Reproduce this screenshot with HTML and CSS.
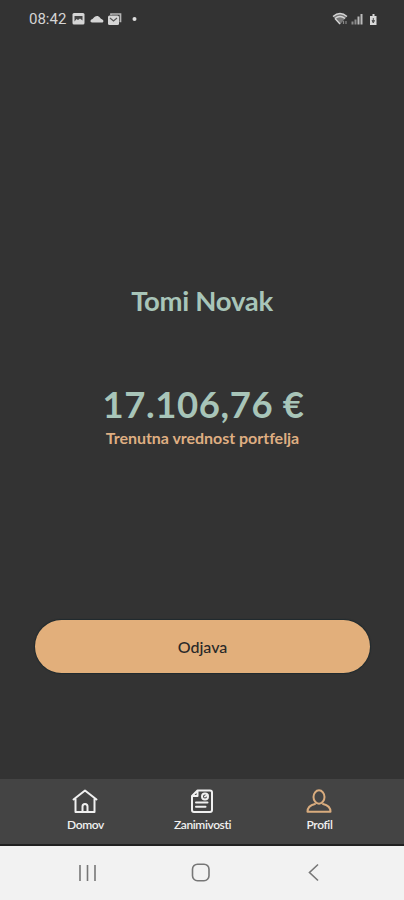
FILE: index.html
```html
<!DOCTYPE html>
<html lang="sl">
<head>
<meta charset="utf-8">
<title>Profil</title>
<link rel="stylesheet" href="styles.css">
</head>
<body>
<div class="screen">
  <header class="status">
    <span class="clock">08:42</span>
    <svg class="notifications" width="70" height="16" viewBox="0 0 70 16">
      <rect x="2.500" y="2" width="12" height="11.500" rx="1.500" fill="#d5d5d5"/>
      <path d="M4.500 10.500V5h8v4.500l-2.500-2-2 1.500-1.500-1z" fill="#444"/>
      <path d="M22 11.500c-2 0-2-2.500 0-3.200 1.500-.4 2-3.300 5-3.300 2.500 0 3 2.500 4.500 3 2.500.8 2.500 3.500.5 3.500z" fill="#d5d5d5"/>
      <path d="M41 4V3h9.500v7.500h-1" fill="none" stroke="#b5b5b5" stroke-width="1.700"/>
      <rect x="38" y="4.500" width="11" height="9.500" rx="1.500" fill="#d5d5d5"/>
      <path d="M40 7l3.500 3 3.500-3" fill="none" stroke="#555" stroke-width="1.200"/>
      <circle cx="64.500" cy="8" r="2" fill="#dedede"/>
    </svg>
    <svg class="signals" width="50" height="16" viewBox="0 0 50 16">
      <path d="M2 5.500q7-6 14 0l-7 8z" fill="#777"/>
      <path d="M2 5.500q7-6 14 0M4 7.500q5-4 10 0M4 7.500l5 5.500" fill="none" stroke="#d5d5d5" stroke-width="1.300"/>
      <path d="M12.500 13v-3m2.500 3v-3" stroke="#888" stroke-width="1.200"/>
      <path d="M21.500 13.500v-3M24.500 13.500v-5" stroke="#8c8c8c" stroke-width="2"/>
      <path d="M27.500 13.500v-8M30.500 13.500V3" stroke="#bbb" stroke-width="2"/>
      <path d="M41.500 3h2v2H45.500v9h-6.500V5h2.500z" fill="#d9d9d9"/>
      <path d="M41 9.500h2.500L42.300 12zM42.300 7v3" fill="#555" stroke="#555"/>
    </svg>
  </header>
  <main class="profile">
    <h1 class="name">Tomi Novak</h1>
    <div class="amount">17.106,76 €</div>
    <p class="caption">Trenutna vrednost portfelja</p>
    <button class="logout">Odjava</button>
  </main>
  <nav class="tabs">
    <a class="tab">
      <svg width="28" height="26" viewBox="0 0 28 26">
        <path d="M2.500 11.500L14 2.500l11.500 9M4.500 11v13h19V11M11.500 24v-5.500a2.500 2.500 0 0 1 5 0V24"/>
      </svg>
      <span class="label">Domov</span>
    </a>
    <a class="tab">
      <svg width="28" height="26" viewBox="0 0 28 26">
        <path d="M9.500 2.500H22a2 2 0 0 1 2 2V22a2 2 0 0 1-2 2H6a2 2 0 0 1-2-2V8zM9.500 2.500V8H4M8 14.500h11.500M8 18.700h9.500"/>
        <circle cx="17" cy="8.500" r="3"/>
        <path d="M17 8.500l2.500-1.500"/>
      </svg>
      <span class="label">Zanimivosti</span>
    </a>
    <a class="tab active">
      <svg width="28" height="26" viewBox="0 0 28 26">
        <ellipse cx="14" cy="9" rx="5.500" ry="6.700"/>
        <path d="M10 16C5.500 17 2.500 19.500 2.500 23.700h23c0-4.200-3-6.700-7.500-7.700"/>
      </svg>
      <span class="label">Profil</span>
    </a>
  </nav>
  <footer class="system">
    <svg width="20" height="20" viewBox="0 0 20 20"><path d="M3 2v16M10.500 2v16M18 2v16"/></svg>
    <svg width="20" height="20" viewBox="0 0 20 20"><rect x="1.500" y="1.200" width="16.500" height="16.500" rx="5"/></svg>
    <svg width="20" height="20" viewBox="0 0 20 20"><path d="M14 1.500L5.500 9.500l8.500 8"/></svg>
  </footer>
</div>
</body>
</html>
```
FILE: styles.css
```css
* { box-sizing: border-box; }
body { margin: 0; background: #333; font-family: Lato, sans-serif; }
.screen { width: 404px; height: 900px; display: flex; flex-direction: column; overflow: hidden; }
.status { height: 38px; display: flex; align-items: center; padding: 0 23px 0 29px; flex: none; }
.clock { font: 15px/18px Roboto, sans-serif; color: #d5d5d5; width: 41px; }
.signals { margin-left: auto; }
.profile { flex: 1; display: flex; flex-direction: column; align-items: center; text-align: center; }
.name { margin: 246px 0 0; font-size: 27.5px; line-height: 34px; font-weight: 700; letter-spacing: -0.3px; color: #a8c5b9; }
.amount { margin: 63px 0 0 3px; font-size: 36.5px; line-height: 46px; font-weight: 700; letter-spacing: 0.6px; color: #a8c5b9; white-space: nowrap; }
.caption { margin: 1px 0 0 1px; font-size: 16px; line-height: 20px; font-weight: 700; letter-spacing: -0.03px; color: #dfae82; }
.logout { margin: 172px 0 0 1px; width: 335px; height: 53px; border: 0; border-radius: 27px; background: #e2af7b; box-shadow: 0 0 1px 1px #202a2e; color: #292929; font: 500 16px/20px Lato, sans-serif; padding: 0; }
.tabs { height: 67px; flex: none; display: grid; grid-template-columns: repeat(3, 117px); justify-content: center; background: #444; border-bottom: 2px solid #202020; padding-top: 9px; }
.tab { display: flex; flex-direction: column; align-items: center; }
.tab svg { fill: none; stroke: #f0f0f0; stroke-width: 2; stroke-linejoin: round; stroke-linecap: round; }
.tab.active svg { stroke: #d9ac7e; }
.label { margin: 3px 0 0 1px; font-size: 12px; line-height: 15px; font-weight: 600; letter-spacing: -0.4px; color: #f0f0f0; }
.system { height: 54px; flex: none; background: #f2f2f2; display: flex; justify-content: space-between; padding: 17px 80px 0 77px; }
.system svg { fill: none; stroke: #777; stroke-width: 1.6; }
```
